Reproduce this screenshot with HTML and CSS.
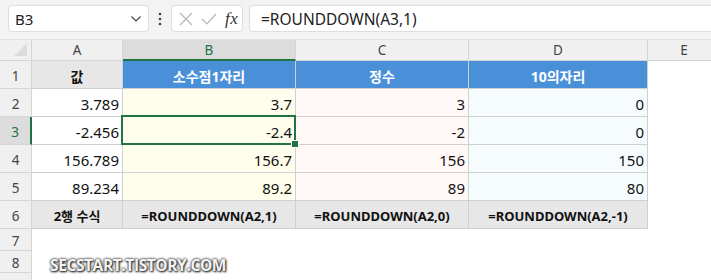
FILE: index.html
```html
<!DOCTYPE html>
<html lang="ko">
<head>
<meta charset="utf-8">
<title>ROUNDDOWN</title>
<link rel="stylesheet" href="styles.css">
</head>
<body>
<div class="topbar">
  <div class="namebox">
    <span class="namebox-text">B3</span>
    <svg class="chev" width="12" height="8" viewBox="0 0 12 8"><path d="M1.5 1.5 L6 6 L10.5 1.5" fill="none" stroke="#444" stroke-width="1.2"/></svg>
  </div>
  <div class="dots"><svg width="4" height="14" viewBox="0 0 4 14"><circle cx="2" cy="2" r="1.3" fill="#444"/><circle cx="2" cy="7" r="1.3" fill="#444"/><circle cx="2" cy="12" r="1.3" fill="#444"/></svg></div>
  <div class="fxbox">
    <svg width="14" height="14" viewBox="0 0 14 14"><path d="M1 1 L13 13 M13 1 L1 13" stroke="#b5b5b5" stroke-width="1.2"/></svg>
    <svg width="16" height="14" viewBox="0 0 16 14"><path d="M1 7 L6 12 L15 2" fill="none" stroke="#b5b5b5" stroke-width="1.2"/></svg>
    <span class="fx">fx</span>
  </div>
  <div class="formula">=ROUNDDOWN(A3,1)</div>
</div>
<div class="sheet">
  <div class="corner"><span class="tri"></span></div>
  <div class="colh">A</div>
  <div class="colh sel">B</div>
  <div class="colh">C</div>
  <div class="colh">D</div>
  <div class="colh noline">E</div>

  <div class="rowh">1</div>
  <div class="cell head-gray">값</div>
  <div class="cell head-blue">소수점1자리</div>
  <div class="cell head-blue">정수</div>
  <div class="cell head-blue">10의자리</div>
  <div class="blank"></div>

  <div class="rowh">2</div>
  <div class="cell num">3.789</div>
  <div class="cell num yel">3.7</div>
  <div class="cell num pink">3</div>
  <div class="cell num cyan">0</div>
  <div class="blank"></div>

  <div class="rowh sel">3</div>
  <div class="cell num">-2.456</div>
  <div class="cell num yel active">-2.4</div>
  <div class="cell num pink">-2</div>
  <div class="cell num cyan">0</div>
  <div class="blank"></div>

  <div class="rowh">4</div>
  <div class="cell num">156.789</div>
  <div class="cell num yel">156.7</div>
  <div class="cell num pink">156</div>
  <div class="cell num cyan">150</div>
  <div class="blank"></div>

  <div class="rowh">5</div>
  <div class="cell num">89.234</div>
  <div class="cell num yel">89.2</div>
  <div class="cell num pink">89</div>
  <div class="cell num cyan">80</div>
  <div class="blank"></div>

  <div class="rowh">6</div>
  <div class="cell foot">2행 수식</div>
  <div class="cell foot">=ROUNDDOWN(A2,1)</div>
  <div class="cell foot">=ROUNDDOWN(A2,0)</div>
  <div class="cell foot">=ROUNDDOWN(A2,-1)</div>
  <div class="blank"></div>

  <div class="rowh">7</div>
  <div class="blank"></div><div class="blank"></div><div class="blank"></div><div class="blank"></div><div class="blank"></div>
  <div class="rowh">8</div>
  <div class="blank"></div><div class="blank"></div><div class="blank"></div><div class="blank"></div><div class="blank"></div>
  <div class="rowh"></div>
  <div class="blank"></div><div class="blank"></div><div class="blank"></div><div class="blank"></div><div class="blank"></div>
</div>
<div class="watermark">SECSTART.TISTORY.COM</div>
</body>
</html>
```
FILE: styles.css
```css
* { box-sizing: border-box; }
html, body {
  margin: 0;
  padding: 0;
  width: 711px;
  height: 280px;
  overflow: hidden;
  background: #ffffff;
  font-family: "Noto Sans", "Noto Sans CJK KR", sans-serif;
  color: #222;
}
.topbar {
  height: 40px;
  background: #f3f3f3;
  display: flex;
  align-items: flex-start;
  padding-top: 5px;
  padding-left: 8px;
  border-bottom: 1px solid #e2e2e2;
}
.namebox {
  width: 141px;
  height: 27px;
  background: #fff;
  border: 1px solid #dedede;
  border-radius: 4px;
  display: flex;
  align-items: center;
  justify-content: space-between;
  padding: 0 6px 0 6px;
  font-size: 15px;
  color: #222;
}
.chev { margin-top: 1px; }
.dots {
  width: 22px;
  height: 27px;
  display: flex;
  align-items: center;
  justify-content: center;
}
.fxbox {
  width: 72px;
  height: 27px;
  background: #fff;
  border: 1px solid #dedede;
  border-radius: 4px;
  display: flex;
  align-items: center;
  gap: 8px;
  padding-left: 7px;
}
.fx {
  font-family: "Liberation Serif", serif;
  font-style: italic;
  font-size: 17px;
  color: #333;
  letter-spacing: 0.5px;
}
.formula {
  margin-left: 6px;
  flex: 1;
  height: 27px;
  background: #fff;
  border: 1px solid #dedede;
  border-right: none;
  border-radius: 4px 0 0 4px;
  display: flex;
  align-items: center;
  padding-left: 11px;
  font-size: 15.5px;
  color: #222;
}
.sheet {
  display: grid;
  grid-template-columns: 32px 91px 173px 173px 179px 72px;
  grid-template-rows: 21px repeat(6, 28px) 22px 22px 22px;
}
.corner {
  background: #f0f0f0;
  border-right: 1px solid #d5d5d5;
  border-bottom: 1px solid #d5d5d5;
  position: relative;
}
.tri {
  position: absolute;
  right: 4px;
  bottom: 4px;
  width: 0;
  height: 0;
  border-left: 13px solid transparent;
  border-bottom: 13px solid #dcdcdc;
}
.colh {
  background: #f0f0f0;
  border-right: 1px solid #d5d5d5;
  border-bottom: 1px solid #d5d5d5;
  display: flex;
  align-items: center;
  justify-content: center;
  font-size: 13.5px;
  color: #444;
}
.colh.sel {
  background: #dcdcdc;
  color: #217346;
  border-bottom: 2px solid #217346;
}
.colh.noline { border-right: none; }
.rowh {
  background: #f0f0f0;
  border-right: 1px solid #d5d5d5;
  border-bottom: 1px solid #d5d5d5;
  display: flex;
  align-items: center;
  justify-content: center;
  font-size: 13.5px;
  color: #444;
  padding-top: 2px;
}
.rowh.sel {
  background: #dcdcdc;
  color: #217346;
  border-right: 2px solid #217346;
}
.cell {
  border-right: 1px solid #d0d0d0;
  border-bottom: 1px solid #d0d0d0;
  display: flex;
  align-items: center;
  font-size: 15px;
  padding-top: 2px;
}
.num {
  justify-content: flex-end;
  padding-right: 3px;
  color: #111;
}
.head-gray {
  background: #e7e7e7;
  justify-content: center;
  font-weight: bold;
  font-size: 14px;
  color: #111;
}
.head-blue {
  background: #4a90d9;
  justify-content: center;
  font-weight: bold;
  font-size: 14px;
  color: #fff;
}
.foot {
  background: #e7e7e7;
  justify-content: center;
  font-weight: bold;
  font-size: 13px;
  color: #111;
}
.yel { background: #fffdeb; }
.pink { background: #fff8f7; }
.cyan { background: #f6fcfd; }
.blank { background: #fff; }
.active { position: relative; }
.active::before {
  content: "";
  position: absolute;
  left: -2px;
  top: -2px;
  right: -1px;
  bottom: -1px;
  border: 2px solid #217346;
}
.active::after {
  content: "";
  position: absolute;
  right: -4px;
  bottom: -4px;
  width: 6px;
  height: 6px;
  background: #217346;
  border: 1px solid #fff;
}
.watermark {
  position: absolute;
  left: 50px;
  top: 254px;
  font-family: "Open Sans", "Noto Sans", sans-serif;
  font-weight: bold;
  font-size: 15.5px;
  color: #f4f4f4;
  letter-spacing: -0.4px;
  text-shadow: 0 0 2px #333, 0 0 3px #444, 1px 1px 2px #222;
}
```
